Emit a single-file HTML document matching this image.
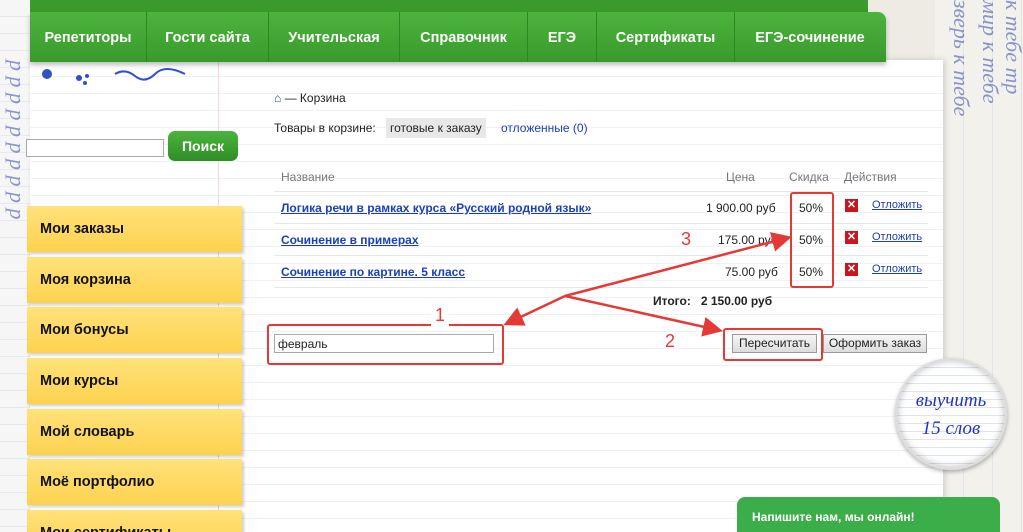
<!DOCTYPE html>
<html style="width:1023px;height:532px;overflow:hidden"><head><meta charset="utf-8"><style>
*{margin:0;padding:0;box-sizing:border-box}
body{width:1023px;height:532px;overflow:hidden;position:relative;font-family:"Liberation Sans",sans-serif;font-size:12px;color:#222;background:#eeeae4}
.lstrip{position:absolute;left:0;top:0;width:32px;height:532px;background:repeating-linear-gradient(#f6f6f7 0 16px,#e6e9f1 16px 17px)}
.rstrip{position:absolute;left:935px;top:0;width:88px;height:532px;background:repeating-linear-gradient(90deg,#f3f1ec 0 28px,#e2e4ec 28px 29px)}
.hw{position:absolute;color:#4456b0;font-family:"Liberation Serif",serif;font-style:italic;font-size:22px;writing-mode:vertical-rl;opacity:.6}
.paper{position:absolute;left:30px;top:60px;width:913px;height:472px;background:#fff repeating-linear-gradient(#fff 0 16px,#eef1f8 16px 17px);box-shadow:2px 0 6px rgba(0,0,0,.15)}
.margin{position:absolute;left:218px;top:60px;width:1px;height:472px;background:#f6d6d6}
.topbar{position:absolute;left:30px;top:0;width:838px;height:14px;background:#3a9a2c}
.nav{position:absolute;left:30px;top:12px;width:856px;height:50px;background:linear-gradient(#4cb43d,#399a2b);border-radius:0 8px 0 0;display:flex;box-shadow:0 3px 5px rgba(0,0,0,.25)}
.nav div{color:#fff;font-weight:bold;font-size:14.5px;line-height:52px;text-align:center;border-right:1px solid #2f8724}
.srch{position:absolute;left:26px;top:139px;width:138px;height:18px;border:1px solid #aaa;background:#fff}
.btn{position:absolute;left:168px;top:131px;width:70px;height:30px;border-radius:7px;background:linear-gradient(#4cb43d,#2f8d25);color:#fff;font-weight:bold;font-size:14px;line-height:30px;text-align:center}
.menu{position:absolute;left:27px;width:215px;height:46px;background:linear-gradient(#ffe27a,#fdd24f);box-shadow:2px 2px 3px rgba(0,0,0,.2);font-weight:bold;font-size:14.5px;line-height:46px;padding-left:13px;color:#111}
.t{position:absolute;white-space:nowrap}
a{color:#1b3fb8}
.lk{font-weight:bold;text-decoration:underline;color:#1b3fb8;font-size:12px}
.hl{position:absolute;left:274px;width:654px;height:1px;background:#e3e7f0}
.x{position:absolute;left:845px;width:13px;height:13px;background:#c8161a;color:#fff;font-size:11px;font-weight:bold;line-height:13px;text-align:center}
.ot{font-size:11px;text-decoration:underline;color:#1b3fb8}
.inp{position:absolute;left:274px;top:334px;width:220px;height:19px;border:1px solid #aaa;background:#fff;padding:2px 3px;font-size:12px}
.gb{position:absolute;top:334px;height:19px;border:1px solid #999;background:linear-gradient(#f6f6f6,#ddd);font-size:12px;line-height:17px;text-align:center}
.rb{position:absolute;border:2px solid #e53935;border-radius:3px}
.num{position:absolute;color:#e53935;font-size:18px}
.mag{position:absolute;left:895px;top:358px;width:112px;height:112px;border-radius:50%;background:#fff repeating-linear-gradient(#fff 0 7px,#dfe4f3 7px 8px);box-shadow:inset 0 0 8px rgba(0,0,0,.3),0 2px 4px rgba(0,0,0,.3);border:2px solid #ddd}
.mag span{position:absolute;width:100%;text-align:center;color:#2233cc;font-family:"Liberation Serif",serif;font-style:italic;font-size:19px}
.chat{position:absolute;left:737px;top:497px;width:263px;height:35px;background:#3bae49;border-radius:8px 8px 0 0;color:#fff;font-weight:bold;font-size:12px;padding:13px 0 0 15px}
</style></head><body>
<div class="lstrip"></div>
<div class="hw" style="left:4px;top:60px">р р р р р р р р р р</div>
<div class="rstrip"></div>
<div class="hw" style="left:948px;top:0">зверь к тебе</div>
<div class="hw" style="left:977px;top:0">мир к тебе</div>
<div class="hw" style="left:1000px;top:0">к тебе тр</div>
<div class="paper"></div>
<div class="margin"></div>
<svg style="position:absolute;left:35px;top:62px" width="160" height="36"><circle cx="12" cy="12" r="5" fill="#2f52c9"/><circle cx="44" cy="16" r="3" fill="#2f52c9"/><circle cx="52" cy="14" r="2" fill="#2f52c9"/><circle cx="50" cy="21" r="2" fill="#2f52c9"/><path d="M80 12 q10 -6 20 2 t20 -2 t30 0" stroke="#2f52c9" stroke-width="2" fill="none"/></svg>
<div class="topbar"></div>
<div class="nav">
<div style="width:117px">Репетиторы</div><div style="width:122px">Гости сайта</div><div style="width:131px">Учительская</div><div style="width:128px">Справочник</div><div style="width:69px">ЕГЭ</div><div style="width:138px">Сертификаты</div><div style="width:150px;border:0">ЕГЭ-сочинение</div>
</div>
<div class="srch"></div><div class="btn">Поиск</div>
<div class="menu" style="top:206px">Мои заказы</div>
<div class="menu" style="top:257px">Моя корзина</div>
<div class="menu" style="top:307px">Мои бонусы</div>
<div class="menu" style="top:358px">Мои курсы</div>
<div class="menu" style="top:409px">Мой словарь</div>
<div class="menu" style="top:459px">Моё портфолио</div>
<div class="menu" style="top:510px">Мои сертификаты</div>
<div class="t" style="left:274px;top:91px"><span style="color:#1b3fb8">⌂</span> — Корзина</div>
<div class="t" style="left:274px;top:121px">Товары в корзине:</div>
<div class="t" style="left:386px;top:118px;background:#e8e8e8;padding:3px 4px">готовые к заказу</div>
<div class="t" style="left:501px;top:121px"><a>отложенные (0)</a></div>
<div class="t" style="left:281px;top:170px;color:#777">Название</div>
<div class="t" style="left:726px;top:170px;color:#777">Цена</div>
<div class="t" style="left:789px;top:170px;color:#777">Скидка</div>
<div class="t" style="left:844px;top:170px;color:#777">Действия</div>
<div class="hl" style="top:191px"></div><div class="hl" style="top:223px"></div><div class="hl" style="top:255px"></div><div class="hl" style="top:287px"></div>
<div class="t lk" style="left:281px;top:201px">Логика речи в рамках курса «Русский родной язык»</div>
<div class="t lk" style="left:281px;top:233px">Сочинение в примерах</div>
<div class="t lk" style="left:281px;top:265px">Сочинение по картине. 5 класс</div>
<div class="t" style="left:706px;top:201px">1 900.00 руб</div>
<div class="t" style="left:718px;top:233px">175.00 руб</div>
<div class="t" style="left:725px;top:265px">75.00 руб</div>
<div class="t" style="left:799px;top:201px">50%</div><div class="t" style="left:799px;top:233px">50%</div><div class="t" style="left:799px;top:265px">50%</div>
<div class="x" style="top:199px">✕</div><div class="x" style="top:231px">✕</div><div class="x" style="top:263px">✕</div>
<div class="t ot" style="left:872px;top:199px">Отложить</div><div class="t ot" style="left:872px;top:231px">Отложить</div><div class="t ot" style="left:872px;top:263px">Отложить</div>
<div class="t" style="left:653px;top:294px;font-weight:bold">Итого:&nbsp;&nbsp;&nbsp;2 150.00 руб</div>
<div class="inp">февраль</div>
<div class="gb" style="left:732px;width:85px">Пересчитать</div>
<div class="gb" style="left:823px;width:104px">Оформить заказ</div>
<div class="rb" style="left:267px;top:324px;width:237px;height:41px"></div>
<div class="rb" style="left:723px;top:328px;width:100px;height:33px"></div>
<div class="rb" style="left:790px;top:192px;width:44px;height:96px"></div>
<div class="num" style="left:431px;top:305px;background:#fff;padding:0 4px">1</div>
<div class="num" style="left:665px;top:331px">2</div>
<div class="num" style="left:681px;top:229px">3</div>
<svg style="position:absolute;left:0;top:0" width="1023" height="532"><defs><marker id="a" markerWidth="8" markerHeight="8" refX="6" refY="4" orient="auto"><path d="M0 0L8 4L0 8z" fill="#e53935"/></marker></defs>
<g stroke="#e53935" stroke-width="2.5" fill="none" marker-end="url(#a)"><path d="M565 296L508 323"/><path d="M565 296L718 330"/><path d="M565 296L787 238"/></g></svg>
<div class="mag"><span style="top:30px">выучить</span><span style="top:58px">15 слов</span></div>
<div class="chat">Напишите нам, мы онлайн!</div>
</body></html>
